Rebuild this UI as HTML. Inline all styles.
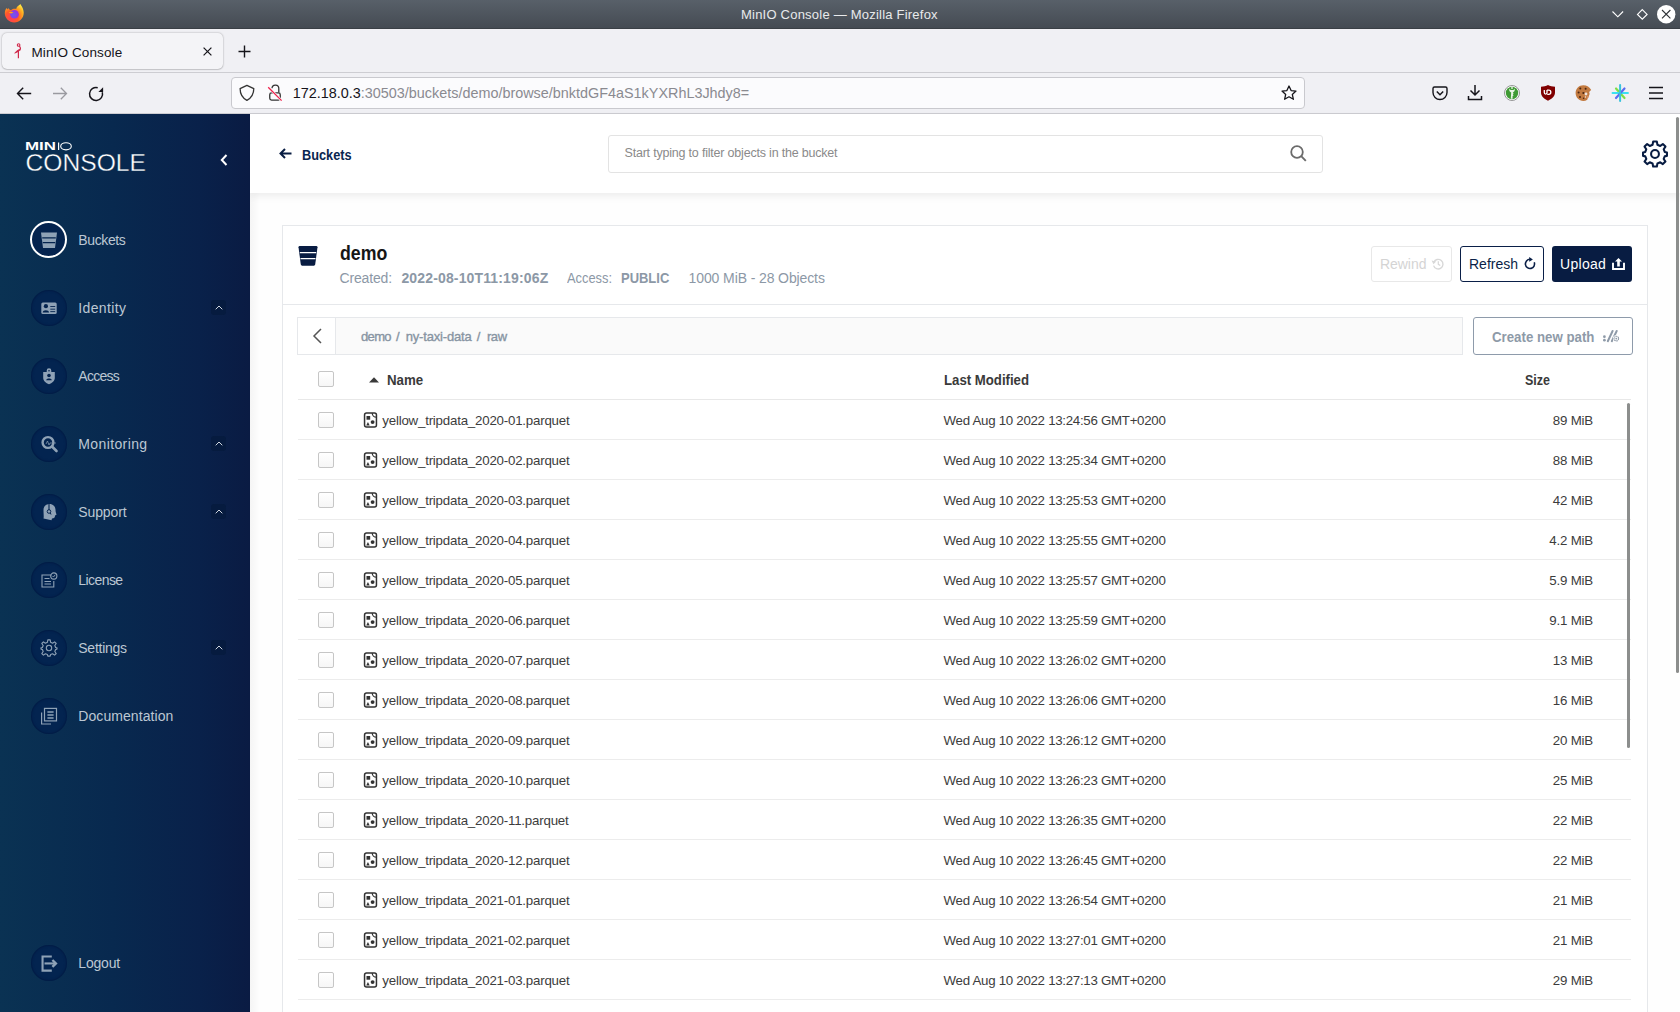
<!DOCTYPE html>
<html><head><meta charset="utf-8"><title>MinIO Console</title><style>
*{box-sizing:border-box;margin:0;padding:0}
html,body{width:1680px;height:1012px;overflow:hidden;background:#fff;font-family:"Liberation Sans",sans-serif}
.t{position:absolute;line-height:1;white-space:nowrap}
.a{position:absolute}
svg{position:absolute;overflow:visible}
</style></head><body>
<div class="a" style="left:0;top:0;width:1680px;height:29px;background:linear-gradient(#586069,#454b53);border-bottom:1px solid #3a3f45"></div>
<div class="t" style="left:741px;top:8.25px;font-size:13px;color:#e8eaec;font-weight:400;letter-spacing:0.22px;">MinIO Console — Mozilla Firefox</div>
<svg style="left:4px;top:3px" width="21" height="21" viewBox="0 0 21 21">
<defs><radialGradient id="ffg" cx="0.35" cy="0.75" r="0.8"><stop offset="0" stop-color="#ff3c5a"/><stop offset="0.45" stop-color="#ff5a2a"/><stop offset="0.8" stop-color="#ffb020"/><stop offset="1" stop-color="#ffe040"/></radialGradient>
<radialGradient id="ffp" cx="0.4" cy="0.6" r="0.6"><stop offset="0" stop-color="#6a5cf0"/><stop offset="1" stop-color="#9a30e0"/></radialGradient></defs>
<path d="M16.5 1 C17.5 3.5 19.5 5 19.7 9.5 C19.9 15 15.5 19.5 10.2 19.5 C5 19.5 0.8 15.3 0.8 10.3 C0.8 8 1.6 6.2 2.6 5 L3.4 6.6 L4.2 5 C5.2 6.4 6 7 7 7.2 C8.5 6 10.5 5.6 12.2 6 C12.4 4 14.5 2.5 16.5 1 Z" fill="url(#ffg)"/>
<circle cx="10.5" cy="11.2" r="4.3" fill="url(#ffp)"/>
<path d="M4.5 9.5 C6 8.3 8 8.6 9.5 9.6 L7.2 10.6 Z" fill="#ffa515"/>
</svg>
<svg style="left:1612px;top:11px" width="12" height="7" viewBox="0 0 12 7"><path d="M0.5 0.5 L5.8 5.8 L11.1 0.5" fill="none" stroke="#fff" stroke-width="1.15"/></svg>
<svg style="left:1636.5px;top:8.5px" width="11" height="11" viewBox="0 0 11 11"><path d="M5.3 0.6 L10.1 5.4 L5.3 10.2 L0.5 5.4 Z" fill="none" stroke="#fff" stroke-width="1.15"/></svg>
<svg style="left:1656.8px;top:4.7px" width="19" height="19" viewBox="0 0 19 19"><circle cx="9.2" cy="9.2" r="9.2" fill="#fff"/><path d="M5 5 L13.4 13.4 M13.4 5 L5 13.4" stroke="#2e3236" stroke-width="1.1"/></svg>
<div class="a" style="left:0;top:29px;width:1680px;height:44px;background:#f0f0f4;border-bottom:1px solid #cdcdd2"></div>
<div class="a" style="left:2px;top:33px;width:221px;height:36px;background:#f4f4f7;border-radius:5px;box-shadow:0 0 2px rgba(0,0,0,.35),0 1px 1px rgba(0,0,0,.1)"></div>
<svg style="left:10px;top:38px" width="20" height="24" viewBox="0 0 20 24"><circle cx="8.6" cy="7" r="1.3" fill="none" stroke="#d02a4c" stroke-width="1.1"/><path d="M9.4 8.2 C10.6 9.5 10.8 11 9.8 12.3" fill="none" stroke="#d02a4c" stroke-width="1.1"/><path d="M10.2 10.8 C8.5 11.2 6 13 4 15.6 C6 15.4 8.5 14 10 12.5 Z" fill="#d02a4c"/><path d="M8.4 12.5 V20.2" stroke="#d02a4c" stroke-width="1.2"/></svg>
<div class="t" style="left:31.5px;top:45.57px;font-size:13.5px;color:#15141a;font-weight:400;letter-spacing:0.12px;">MinIO Console</div>
<svg style="left:203px;top:47px" width="9" height="9" viewBox="0 0 9 9"><path d="M0.6 0.6 L8.4 8.4 M8.4 0.6 L0.6 8.4" stroke="#15141a" stroke-width="1.2"/></svg>
<svg style="left:238px;top:45px" width="13" height="13" viewBox="0 0 13 13"><path d="M6.5 0.5 V12.5 M0.5 6.5 H12.5" stroke="#15141a" stroke-width="1.4"/></svg>
<div class="a" style="left:0;top:73px;width:1680px;height:41px;background:#f0f0f4;border-bottom:1px solid #cdcdd2"></div>
<svg style="left:16px;top:86px" width="16" height="15" viewBox="0 0 16 15"><path d="M15.2 7.5 H2 M7.2 1.8 L1.5 7.5 L7.2 13.2" fill="none" stroke="#15141a" stroke-width="1.4"/></svg>
<svg style="left:52px;top:86px" width="16" height="15" viewBox="0 0 16 15"><path d="M1 7.5 H14.2 M8.8 1.8 L14.5 7.5 L8.8 13.2" fill="none" stroke="#9a9aa0" stroke-width="1.3"/></svg>
<svg style="left:88px;top:86px" width="16" height="16" viewBox="0 0 16 16"><path d="M9.7 1.7 A6.5 6.5 0 1 0 14.3 6.2" fill="none" stroke="#15141a" stroke-width="1.5"/><path d="M10.4 6.1 L15.1 6.1 L15.1 1.2 Z" fill="#15141a"/></svg>
<div class="a" style="left:231px;top:77px;width:1074px;height:32px;background:#fbfbfd;border:1px solid #c9c9ce;border-radius:4px"></div>
<svg style="left:239px;top:84px" width="16" height="17" viewBox="0 0 16 17"><path d="M7.9 1.3 L14.8 4.6 C14.8 10 12.5 14 7.9 16.4 C3.3 14 1.1 10 1.1 4.6 Z" fill="none" stroke="#333" stroke-width="1.3" stroke-linejoin="round"/></svg>
<svg style="left:267px;top:84px" width="16" height="17" viewBox="0 0 16 17"><rect x="2.75" y="8.85" width="10.5" height="7.3" rx="1.8" fill="none" stroke="#333" stroke-width="1.3"/><path d="M5 4.3 A3.4 3.4 0 0 1 11.8 4.6 V8.6" fill="none" stroke="#333" stroke-width="1.3"/><path d="M1.2 3.2 L14.6 16.6" stroke="#fafafa" stroke-width="2.6"/><path d="M1.2 3.2 L14.6 16.6" stroke="#f0204c" stroke-width="1.3"/></svg>
<div class="t" style="left:292.8px;top:86.11px;font-size:14.4px;color:#15141a;font-weight:400;letter-spacing:0px;"><span style="color:#15141a">172.18.0.3</span><span style="color:#8a8a90">:30503/buckets/demo/browse/bnktdGF4aS1kYXRhL3Jhdy8=</span></div>
<svg style="left:1281px;top:85px" width="16" height="16" viewBox="0 0 16 16"><path d="M8 1 L10.1 5.6 L15 6.1 L11.3 9.4 L12.4 14.3 L8 11.8 L3.6 14.3 L4.7 9.4 L1 6.1 L5.9 5.6 Z" fill="none" stroke="#15141a" stroke-width="1.3" stroke-linejoin="round"/></svg>
<svg style="left:1432px;top:86px" width="16" height="15" viewBox="0 0 16 15"><path d="M2.5 1 H13.5 A1.5 1.5 0 0 1 15 2.5 V6.5 A7 7 0 0 1 1 6.5 V2.5 A1.5 1.5 0 0 1 2.5 1 Z" fill="none" stroke="#15141a" stroke-width="1.4"/><path d="M4.8 5.5 L8 8.7 L11.2 5.5" fill="none" stroke="#15141a" stroke-width="1.5"/></svg>
<svg style="left:1467px;top:84px" width="16" height="17" viewBox="0 0 16 17"><path d="M8 1 V11 M3.5 6.5 L8 11 L12.5 6.5 M1.5 12 V15.5 H14.5 V12" fill="none" stroke="#15141a" stroke-width="1.5"/></svg>
<svg style="left:1504px;top:85px" width="16" height="16" viewBox="0 0 16 16"><circle cx="8" cy="8" r="7.5" fill="#fff" stroke="#8a8a8a" stroke-width="0.9"/><circle cx="8" cy="8" r="6.2" fill="#3f9a34"/><path d="M5 3.5 C5 6.5 6.5 7 7.2 7.6 L6.8 13.8 H8.6 L8.6 11 L9.6 10.5 L8.8 9.5 L9.6 8.8 L8.8 7.6 C9.5 7 11 6.5 11 3.5 C10 5.5 6 5.5 5 3.5 Z" fill="#e8f4e4"/><circle cx="8" cy="3" r="0.9" fill="#e8f4e4"/></svg>
<svg style="left:1540px;top:84px" width="16" height="17" viewBox="0 0 16 17"><path d="M8 1 C10 2.2 12.5 2.7 15 2.7 V8.5 C15 12.5 11.5 15 8 16.7 C4.5 15 1 12.5 1 8.5 V2.7 C3.5 2.7 6 2.2 8 1 Z" fill="#800000"/><path d="M4.3 6 V8.6 C4.3 10.6 7 10.6 7 8.6 V6 M7 6.2 H8.8 C11.5 6.2 11.5 10.4 8.8 10.4 H7.2" fill="none" stroke="#fff" stroke-width="1.3"/></svg>
<svg style="left:1575px;top:85px" width="17" height="16" viewBox="0 0 17 16"><path d="M8.3 0.2 C12 0.2 14.6 2 16.2 5 C15.5 6 14.5 6 14.2 7.5 C15.2 9 14 10.5 13.5 11.5 C13 12.5 12.5 14 12.3 14.8 C11 15.6 9.8 16 8.3 16 C3.9 16 0.6 12.5 0.6 8.1 C0.6 3.7 3.9 0.2 8.3 0.2 Z" fill="#c27a40"/><circle cx="5.3" cy="3.4" r="1" fill="#4a2410"/><circle cx="10.6" cy="3.8" r="1" fill="#4a2410"/><circle cx="3.6" cy="7.6" r="1" fill="#4a2410"/><circle cx="8.4" cy="8" r="1.1" fill="#4a2410"/><circle cx="5" cy="12" r="1" fill="#4a2410"/><circle cx="8.6" cy="13.2" r="0.8" fill="#4a2410"/><circle cx="11" cy="9" r="1.4" fill="#f0e4dc"/><circle cx="12.8" cy="11.8" r="1.1" fill="#d89060"/><circle cx="10.5" cy="12" r="0.7" fill="#f4ece4"/></svg>
<svg style="left:1611px;top:84px" width="18" height="18" viewBox="0 0 18 18"><path d="M5 4.5 L13.5 14" stroke="#7ede48" stroke-width="2.2" stroke-linecap="round"/><path d="M1.5 9 H17" stroke="#3ae0f0" stroke-width="1.9" stroke-linecap="round"/><path d="M13.5 4.5 L5 14" stroke="#5a6cf0" stroke-width="2.2" stroke-linecap="round"/><path d="M9.1 1 V17" stroke="#38c4dc" stroke-width="2" stroke-linecap="round"/></svg>
<svg style="left:1648px;top:86px" width="16" height="14" viewBox="0 0 16 14"><path d="M1 1.5 H15 M1 7 H15 M1 12.5 H15" stroke="#15141a" stroke-width="1.5"/></svg>
<div class="a" style="left:250px;top:114px;width:1430px;height:898px;background:#fefefe"></div>
<div class="a" style="left:250px;top:193px;width:10px;height:819px;background:linear-gradient(90deg,rgba(0,0,0,.035),rgba(0,0,0,0))"></div>
<div class="a" style="left:250px;top:114px;width:1430px;height:79px;background:#fff;box-shadow:0 3px 8px rgba(0,0,0,.075)"></div>
<svg style="left:279px;top:148px" width="13" height="11" viewBox="0 0 13 11"><path d="M12.5 5.5 H2 M6 1 L1.5 5.5 L6 10" fill="none" stroke="#081c42" stroke-width="2"/></svg>
<div class="t" style="left:302.2px;top:148.25px;font-size:14px;color:#0a2650;font-weight:700;letter-spacing:0px;transform:scaleX(0.91);transform-origin:0 0;">Buckets</div>
<div class="a" style="left:608px;top:135px;width:715px;height:38px;background:#fff;border:1px solid #e3e3e3;border-radius:3px"></div>
<div class="t" style="left:624.5px;top:147.02px;font-size:12.5px;color:#8a8a8a;font-weight:400;letter-spacing:-0.2px;">Start typing to filter objects in the bucket</div>
<svg style="left:1290px;top:145px" width="17" height="17" viewBox="0 0 17 17"><circle cx="7" cy="7" r="5.8" fill="none" stroke="#6b6b6b" stroke-width="1.8"/><path d="M11.2 11.2 L15.8 15.8" stroke="#6b6b6b" stroke-width="1.9"/></svg>
<svg style="left:1655px;top:154px" width="1" height="1" viewBox="0 0 1 1"><g fill="none" stroke="#081c42" stroke-width="2.2" stroke-linejoin="round" transform="scale(0.935)">
<path d="M-2 -12.2 H2 L2.6 -8.8 L5.6 -7.5 L8.4 -9.5 L11.2 -6.8 L9.3 -4 L10.4 -1.1 L12.8 -0.6 V3.1 L10.4 3.6 L9.3 6.4 L11.2 9.2 L8.4 11.9 L5.6 10 L2.6 11.2 L2 14.4 H-2 L-2.6 11.2 L-5.6 10 L-8.4 11.9 L-11.2 9.2 L-9.3 6.4 L-10.4 3.6 L-12.8 3.1 V-0.6 L-10.4 -1.1 L-9.3 -4 L-11.2 -6.8 L-8.4 -9.5 L-5.6 -7.5 L-2.6 -8.8 Z" transform="translate(0,-1.1)"/>
<circle cx="0" cy="0" r="4.2"/></g></svg>
<div class="a" style="left:1676px;top:116.5px;width:3px;height:556px;border-radius:2px;background:#8c8e8d"></div>
<div class="a" style="left:282px;top:225px;width:1366px;height:800px;background:#fff;border:1px solid #e6e8eb"></div>
<div class="a" style="left:283px;top:304px;width:1364px;height:1px;background:#e6e8eb"></div>
<svg style="left:298px;top:246px" width="20" height="20" viewBox="0 0 20 20"><path d="M0.5 1.2 Q0.5 0 1.7 0 H18.3 Q19.5 0 19.5 1.2 L17.2 18.6 Q17 19.7 15.9 19.7 H4.1 Q3 19.7 2.8 18.6 Z" fill="#081c42"/><path d="M1.8 6.6 H18.2 M2.5 12.7 H17.5" stroke="#fff" stroke-width="1.3"/></svg>
<div class="t" style="left:339.5px;top:242.67px;font-size:20px;color:#161616;font-weight:700;letter-spacing:0px;transform:scaleX(0.887);transform-origin:0 0;">demo</div>
<div class="t" style="left:339.5px;top:271.05px;font-size:14px;color:#8c98a6;font-weight:400;letter-spacing:-0.15px;">Created:</div>
<div class="t" style="left:401.4px;top:271.05px;font-size:14px;color:#8c98a6;font-weight:700;letter-spacing:0.15px;">2022-08-10T11:19:06Z</div>
<div class="t" style="left:567.1px;top:271.05px;font-size:14px;color:#8c98a6;font-weight:400;letter-spacing:0px;transform:scaleX(0.918);transform-origin:0 0;">Access:</div>
<div class="t" style="left:621.3px;top:271.05px;font-size:14px;color:#8c98a6;font-weight:700;letter-spacing:0px;transform:scaleX(0.926);transform-origin:0 0;">PUBLIC</div>
<div class="t" style="left:688.6px;top:271.05px;font-size:14px;color:#8c98a6;font-weight:400;letter-spacing:-0.11px;">1000 MiB - 28 Objects</div>
<div class="a" style="left:1371px;top:246px;width:81px;height:36px;border:1px solid #e8e8e8;border-radius:3px"></div>
<div class="t" style="left:1380px;top:256.95px;font-size:14px;color:#d4d4d4;font-weight:400;letter-spacing:-0.05px;">Rewind</div>
<svg style="left:1432px;top:258px" width="12" height="12" viewBox="0 0 12 12"><path d="M1.8 4.2 A4.8 4.8 0 1 1 1.6 7.6" fill="none" stroke="#d8d8d8" stroke-width="1.4"/><path d="M-0.4 2.6 L1.4 6.2 L4.2 3.4 Z" fill="#d8d8d8"/><path d="M6.3 3.3 V6.3 L8.3 7.6" fill="none" stroke="#d8d8d8" stroke-width="1.2"/></svg>
<div class="a" style="left:1460px;top:246px;width:84px;height:36px;border:1.5px solid #0a1f47;border-radius:3px;background:#fff"></div>
<div class="t" style="left:1469px;top:256.95px;font-size:14px;color:#0a1f47;font-weight:400;letter-spacing:0px;">Refresh</div>
<svg style="left:1524px;top:258px" width="12" height="12" viewBox="0 0 12 12"><path d="M5.9 1.3 A4.6 4.6 0 1 0 10.3 4.3" fill="none" stroke="#0a1f47" stroke-width="1.6"/><path d="M5.2 -1 L8.9 1.4 L5.2 3.8 Z" fill="#0a1f47"/></svg>
<div class="a" style="left:1552px;top:246px;width:80px;height:36px;border-radius:3px;background:#081c42"></div>
<div class="t" style="left:1560px;top:256.95px;font-size:14px;color:#fff;font-weight:400;letter-spacing:0.3px;">Upload</div>
<svg style="left:1611.5px;top:258px" width="13" height="12" viewBox="0 0 13 12"><path d="M6.5 0 L10 3.6 H7.8 V8.5 H5.2 V3.6 H3 Z" fill="#fff"/><path d="M1 4.8 V11 H12 V4.8" fill="none" stroke="#fff" stroke-width="1.9"/></svg>
<div class="a" style="left:297px;top:317px;width:1166px;height:38px;border:1px solid #e6e8eb;background:#fafafa"></div>
<div class="a" style="left:298px;top:318px;width:37.5px;height:36px;background:#fff;border-right:1px solid #e6e8eb"></div>
<svg style="left:312px;top:328px" width="10" height="16" viewBox="0 0 10 16"><path d="M9 1 L2 8 L9 15" fill="none" stroke="#555" stroke-width="1.5"/></svg>
<div class="t" style="left:361.1px;top:329.70px;font-size:13px;color:#8794a2;font-weight:400;letter-spacing:-0.7px;-webkit-text-stroke:0.35px #8794a2;">demo</div>
<div class="t" style="left:396.0px;top:329.70px;font-size:13px;color:#8794a2;font-weight:400;letter-spacing:0px;-webkit-text-stroke:0.35px #8794a2;">/</div>
<div class="t" style="left:405.7px;top:329.70px;font-size:13px;color:#8794a2;font-weight:400;letter-spacing:-0.17px;-webkit-text-stroke:0.35px #8794a2;">ny-taxi-data</div>
<div class="t" style="left:476.8px;top:329.70px;font-size:13px;color:#8794a2;font-weight:400;letter-spacing:0px;-webkit-text-stroke:0.35px #8794a2;">/</div>
<div class="t" style="left:486.9px;top:329.70px;font-size:13px;color:#8794a2;font-weight:400;letter-spacing:-0.4px;-webkit-text-stroke:0.35px #8794a2;">raw</div>
<div class="a" style="left:1473px;top:317px;width:160px;height:38px;border:1px solid #8e9bab;border-radius:3px;background:#fff"></div>
<div class="t" style="left:1491.8px;top:330.05px;font-size:14px;color:#8e9aa8;font-weight:700;letter-spacing:0px;transform:scaleX(0.947);transform-origin:0 0;">Create new path</div>
<svg style="left:1603px;top:330px" width="17" height="13" viewBox="0 0 17 13"><circle cx="1.4" cy="6.7" r="1.35" fill="#8e9aa8"/><circle cx="1.4" cy="10.2" r="1.35" fill="#8e9aa8"/><path d="M9.6 1 L4.8 11.2 M13.7 1 L8.8 11.2" stroke="#8e9aa8" stroke-width="2" stroke-linecap="round"/><circle cx="13.3" cy="8.6" r="2.6" fill="#fff" stroke="#fff" stroke-width="1.6"/><circle cx="13.3" cy="8.6" r="2.3" fill="none" stroke="#8e9aa8" stroke-width="1.1" stroke-dasharray="1.4 0.5"/><circle cx="13.3" cy="8.6" r="0.9" fill="#8e9aa8"/></svg>
<div class="a" style="left:318px;top:371px;width:16px;height:16px;border:1px solid #c6c6c6;border-radius:2px;background:linear-gradient(#fff,#f6f6f6)"></div>
<svg style="left:369px;top:377px" width="10" height="6" viewBox="0 0 10 6"><path d="M0 5.5 L5 0.3 L10 5.5 Z" fill="#3a3a3a"/></svg>
<div class="t" style="left:386.9px;top:373.15px;font-size:14px;color:#3a3a3a;font-weight:700;letter-spacing:0px;transform:scaleX(0.95);transform-origin:0 0;">Name</div>
<div class="t" style="left:943.6px;top:373.15px;font-size:14px;color:#3a3a3a;font-weight:700;letter-spacing:0px;transform:scaleX(0.942);transform-origin:0 0;">Last Modified</div>
<div class="t" style="left:1525px;top:373.15px;font-size:14px;color:#3a3a3a;font-weight:700;letter-spacing:0px;transform:scaleX(0.893);transform-origin:0 0;">Size</div>
<div class="a" style="left:298px;top:399px;width:1333px;height:1px;background:#e8e8e8"></div>
<div class="a" style="left:318px;top:412px;width:16px;height:16px;border:1px solid #c6c6c6;border-radius:2px;background:linear-gradient(#fff,#f6f6f6)"></div>
<svg style="left:362.5px;top:412px" width="14" height="16" viewBox="0 0 14 16"><rect x="1.55" y="0.95" width="11.9" height="14.1" rx="2" fill="none" stroke="#333" stroke-width="1.5"/><path d="M9.2 0.95 A4.25 4.25 0 0 0 13.45 5.2" fill="none" stroke="#333" stroke-width="1.2"/><rect x="3.5" y="4" width="3.7" height="3.7" fill="#333"/><circle cx="9.6" cy="10.1" r="1.95" fill="#333"/><path d="M3.2 13.6 L6.7 13.6 L4.95 9.9 Z" fill="#333"/></svg>
<div class="t" style="left:382.3px;top:413.54px;font-size:13.3px;color:#3c3c3c;font-weight:400;letter-spacing:-0.21px;">yellow_tripdata_2020-01.parquet</div>
<div class="t" style="left:943.6px;top:413.54px;font-size:13.3px;color:#3c3c3c;font-weight:400;letter-spacing:-0.29px;">Wed Aug 10 2022 13:24:56 GMT+0200</div>
<div class="t" style="right:87px;top:413.54px;font-size:13.3px;color:#3c3c3c;letter-spacing:-0.18px">89 MiB</div>
<div class="a" style="left:298px;top:439px;width:1333px;height:1px;background:#ececec"></div>
<div class="a" style="left:318px;top:452px;width:16px;height:16px;border:1px solid #c6c6c6;border-radius:2px;background:linear-gradient(#fff,#f6f6f6)"></div>
<svg style="left:362.5px;top:452px" width="14" height="16" viewBox="0 0 14 16"><rect x="1.55" y="0.95" width="11.9" height="14.1" rx="2" fill="none" stroke="#333" stroke-width="1.5"/><path d="M9.2 0.95 A4.25 4.25 0 0 0 13.45 5.2" fill="none" stroke="#333" stroke-width="1.2"/><rect x="3.5" y="4" width="3.7" height="3.7" fill="#333"/><circle cx="9.6" cy="10.1" r="1.95" fill="#333"/><path d="M3.2 13.6 L6.7 13.6 L4.95 9.9 Z" fill="#333"/></svg>
<div class="t" style="left:382.3px;top:453.54px;font-size:13.3px;color:#3c3c3c;font-weight:400;letter-spacing:-0.21px;">yellow_tripdata_2020-02.parquet</div>
<div class="t" style="left:943.6px;top:453.54px;font-size:13.3px;color:#3c3c3c;font-weight:400;letter-spacing:-0.29px;">Wed Aug 10 2022 13:25:34 GMT+0200</div>
<div class="t" style="right:87px;top:453.54px;font-size:13.3px;color:#3c3c3c;letter-spacing:-0.18px">88 MiB</div>
<div class="a" style="left:298px;top:479px;width:1333px;height:1px;background:#ececec"></div>
<div class="a" style="left:318px;top:492px;width:16px;height:16px;border:1px solid #c6c6c6;border-radius:2px;background:linear-gradient(#fff,#f6f6f6)"></div>
<svg style="left:362.5px;top:492px" width="14" height="16" viewBox="0 0 14 16"><rect x="1.55" y="0.95" width="11.9" height="14.1" rx="2" fill="none" stroke="#333" stroke-width="1.5"/><path d="M9.2 0.95 A4.25 4.25 0 0 0 13.45 5.2" fill="none" stroke="#333" stroke-width="1.2"/><rect x="3.5" y="4" width="3.7" height="3.7" fill="#333"/><circle cx="9.6" cy="10.1" r="1.95" fill="#333"/><path d="M3.2 13.6 L6.7 13.6 L4.95 9.9 Z" fill="#333"/></svg>
<div class="t" style="left:382.3px;top:493.54px;font-size:13.3px;color:#3c3c3c;font-weight:400;letter-spacing:-0.21px;">yellow_tripdata_2020-03.parquet</div>
<div class="t" style="left:943.6px;top:493.54px;font-size:13.3px;color:#3c3c3c;font-weight:400;letter-spacing:-0.29px;">Wed Aug 10 2022 13:25:53 GMT+0200</div>
<div class="t" style="right:87px;top:493.54px;font-size:13.3px;color:#3c3c3c;letter-spacing:-0.18px">42 MiB</div>
<div class="a" style="left:298px;top:519px;width:1333px;height:1px;background:#ececec"></div>
<div class="a" style="left:318px;top:532px;width:16px;height:16px;border:1px solid #c6c6c6;border-radius:2px;background:linear-gradient(#fff,#f6f6f6)"></div>
<svg style="left:362.5px;top:532px" width="14" height="16" viewBox="0 0 14 16"><rect x="1.55" y="0.95" width="11.9" height="14.1" rx="2" fill="none" stroke="#333" stroke-width="1.5"/><path d="M9.2 0.95 A4.25 4.25 0 0 0 13.45 5.2" fill="none" stroke="#333" stroke-width="1.2"/><rect x="3.5" y="4" width="3.7" height="3.7" fill="#333"/><circle cx="9.6" cy="10.1" r="1.95" fill="#333"/><path d="M3.2 13.6 L6.7 13.6 L4.95 9.9 Z" fill="#333"/></svg>
<div class="t" style="left:382.3px;top:533.54px;font-size:13.3px;color:#3c3c3c;font-weight:400;letter-spacing:-0.21px;">yellow_tripdata_2020-04.parquet</div>
<div class="t" style="left:943.6px;top:533.54px;font-size:13.3px;color:#3c3c3c;font-weight:400;letter-spacing:-0.29px;">Wed Aug 10 2022 13:25:55 GMT+0200</div>
<div class="t" style="right:87px;top:533.54px;font-size:13.3px;color:#3c3c3c;letter-spacing:-0.18px">4.2 MiB</div>
<div class="a" style="left:298px;top:559px;width:1333px;height:1px;background:#ececec"></div>
<div class="a" style="left:318px;top:572px;width:16px;height:16px;border:1px solid #c6c6c6;border-radius:2px;background:linear-gradient(#fff,#f6f6f6)"></div>
<svg style="left:362.5px;top:572px" width="14" height="16" viewBox="0 0 14 16"><rect x="1.55" y="0.95" width="11.9" height="14.1" rx="2" fill="none" stroke="#333" stroke-width="1.5"/><path d="M9.2 0.95 A4.25 4.25 0 0 0 13.45 5.2" fill="none" stroke="#333" stroke-width="1.2"/><rect x="3.5" y="4" width="3.7" height="3.7" fill="#333"/><circle cx="9.6" cy="10.1" r="1.95" fill="#333"/><path d="M3.2 13.6 L6.7 13.6 L4.95 9.9 Z" fill="#333"/></svg>
<div class="t" style="left:382.3px;top:573.54px;font-size:13.3px;color:#3c3c3c;font-weight:400;letter-spacing:-0.21px;">yellow_tripdata_2020-05.parquet</div>
<div class="t" style="left:943.6px;top:573.54px;font-size:13.3px;color:#3c3c3c;font-weight:400;letter-spacing:-0.29px;">Wed Aug 10 2022 13:25:57 GMT+0200</div>
<div class="t" style="right:87px;top:573.54px;font-size:13.3px;color:#3c3c3c;letter-spacing:-0.18px">5.9 MiB</div>
<div class="a" style="left:298px;top:599px;width:1333px;height:1px;background:#ececec"></div>
<div class="a" style="left:318px;top:612px;width:16px;height:16px;border:1px solid #c6c6c6;border-radius:2px;background:linear-gradient(#fff,#f6f6f6)"></div>
<svg style="left:362.5px;top:612px" width="14" height="16" viewBox="0 0 14 16"><rect x="1.55" y="0.95" width="11.9" height="14.1" rx="2" fill="none" stroke="#333" stroke-width="1.5"/><path d="M9.2 0.95 A4.25 4.25 0 0 0 13.45 5.2" fill="none" stroke="#333" stroke-width="1.2"/><rect x="3.5" y="4" width="3.7" height="3.7" fill="#333"/><circle cx="9.6" cy="10.1" r="1.95" fill="#333"/><path d="M3.2 13.6 L6.7 13.6 L4.95 9.9 Z" fill="#333"/></svg>
<div class="t" style="left:382.3px;top:613.54px;font-size:13.3px;color:#3c3c3c;font-weight:400;letter-spacing:-0.21px;">yellow_tripdata_2020-06.parquet</div>
<div class="t" style="left:943.6px;top:613.54px;font-size:13.3px;color:#3c3c3c;font-weight:400;letter-spacing:-0.29px;">Wed Aug 10 2022 13:25:59 GMT+0200</div>
<div class="t" style="right:87px;top:613.54px;font-size:13.3px;color:#3c3c3c;letter-spacing:-0.18px">9.1 MiB</div>
<div class="a" style="left:298px;top:639px;width:1333px;height:1px;background:#ececec"></div>
<div class="a" style="left:318px;top:652px;width:16px;height:16px;border:1px solid #c6c6c6;border-radius:2px;background:linear-gradient(#fff,#f6f6f6)"></div>
<svg style="left:362.5px;top:652px" width="14" height="16" viewBox="0 0 14 16"><rect x="1.55" y="0.95" width="11.9" height="14.1" rx="2" fill="none" stroke="#333" stroke-width="1.5"/><path d="M9.2 0.95 A4.25 4.25 0 0 0 13.45 5.2" fill="none" stroke="#333" stroke-width="1.2"/><rect x="3.5" y="4" width="3.7" height="3.7" fill="#333"/><circle cx="9.6" cy="10.1" r="1.95" fill="#333"/><path d="M3.2 13.6 L6.7 13.6 L4.95 9.9 Z" fill="#333"/></svg>
<div class="t" style="left:382.3px;top:653.54px;font-size:13.3px;color:#3c3c3c;font-weight:400;letter-spacing:-0.21px;">yellow_tripdata_2020-07.parquet</div>
<div class="t" style="left:943.6px;top:653.54px;font-size:13.3px;color:#3c3c3c;font-weight:400;letter-spacing:-0.29px;">Wed Aug 10 2022 13:26:02 GMT+0200</div>
<div class="t" style="right:87px;top:653.54px;font-size:13.3px;color:#3c3c3c;letter-spacing:-0.18px">13 MiB</div>
<div class="a" style="left:298px;top:679px;width:1333px;height:1px;background:#ececec"></div>
<div class="a" style="left:318px;top:692px;width:16px;height:16px;border:1px solid #c6c6c6;border-radius:2px;background:linear-gradient(#fff,#f6f6f6)"></div>
<svg style="left:362.5px;top:692px" width="14" height="16" viewBox="0 0 14 16"><rect x="1.55" y="0.95" width="11.9" height="14.1" rx="2" fill="none" stroke="#333" stroke-width="1.5"/><path d="M9.2 0.95 A4.25 4.25 0 0 0 13.45 5.2" fill="none" stroke="#333" stroke-width="1.2"/><rect x="3.5" y="4" width="3.7" height="3.7" fill="#333"/><circle cx="9.6" cy="10.1" r="1.95" fill="#333"/><path d="M3.2 13.6 L6.7 13.6 L4.95 9.9 Z" fill="#333"/></svg>
<div class="t" style="left:382.3px;top:693.54px;font-size:13.3px;color:#3c3c3c;font-weight:400;letter-spacing:-0.21px;">yellow_tripdata_2020-08.parquet</div>
<div class="t" style="left:943.6px;top:693.54px;font-size:13.3px;color:#3c3c3c;font-weight:400;letter-spacing:-0.29px;">Wed Aug 10 2022 13:26:06 GMT+0200</div>
<div class="t" style="right:87px;top:693.54px;font-size:13.3px;color:#3c3c3c;letter-spacing:-0.18px">16 MiB</div>
<div class="a" style="left:298px;top:719px;width:1333px;height:1px;background:#ececec"></div>
<div class="a" style="left:318px;top:732px;width:16px;height:16px;border:1px solid #c6c6c6;border-radius:2px;background:linear-gradient(#fff,#f6f6f6)"></div>
<svg style="left:362.5px;top:732px" width="14" height="16" viewBox="0 0 14 16"><rect x="1.55" y="0.95" width="11.9" height="14.1" rx="2" fill="none" stroke="#333" stroke-width="1.5"/><path d="M9.2 0.95 A4.25 4.25 0 0 0 13.45 5.2" fill="none" stroke="#333" stroke-width="1.2"/><rect x="3.5" y="4" width="3.7" height="3.7" fill="#333"/><circle cx="9.6" cy="10.1" r="1.95" fill="#333"/><path d="M3.2 13.6 L6.7 13.6 L4.95 9.9 Z" fill="#333"/></svg>
<div class="t" style="left:382.3px;top:733.54px;font-size:13.3px;color:#3c3c3c;font-weight:400;letter-spacing:-0.21px;">yellow_tripdata_2020-09.parquet</div>
<div class="t" style="left:943.6px;top:733.54px;font-size:13.3px;color:#3c3c3c;font-weight:400;letter-spacing:-0.29px;">Wed Aug 10 2022 13:26:12 GMT+0200</div>
<div class="t" style="right:87px;top:733.54px;font-size:13.3px;color:#3c3c3c;letter-spacing:-0.18px">20 MiB</div>
<div class="a" style="left:298px;top:759px;width:1333px;height:1px;background:#ececec"></div>
<div class="a" style="left:318px;top:772px;width:16px;height:16px;border:1px solid #c6c6c6;border-radius:2px;background:linear-gradient(#fff,#f6f6f6)"></div>
<svg style="left:362.5px;top:772px" width="14" height="16" viewBox="0 0 14 16"><rect x="1.55" y="0.95" width="11.9" height="14.1" rx="2" fill="none" stroke="#333" stroke-width="1.5"/><path d="M9.2 0.95 A4.25 4.25 0 0 0 13.45 5.2" fill="none" stroke="#333" stroke-width="1.2"/><rect x="3.5" y="4" width="3.7" height="3.7" fill="#333"/><circle cx="9.6" cy="10.1" r="1.95" fill="#333"/><path d="M3.2 13.6 L6.7 13.6 L4.95 9.9 Z" fill="#333"/></svg>
<div class="t" style="left:382.3px;top:773.54px;font-size:13.3px;color:#3c3c3c;font-weight:400;letter-spacing:-0.21px;">yellow_tripdata_2020-10.parquet</div>
<div class="t" style="left:943.6px;top:773.54px;font-size:13.3px;color:#3c3c3c;font-weight:400;letter-spacing:-0.29px;">Wed Aug 10 2022 13:26:23 GMT+0200</div>
<div class="t" style="right:87px;top:773.54px;font-size:13.3px;color:#3c3c3c;letter-spacing:-0.18px">25 MiB</div>
<div class="a" style="left:298px;top:799px;width:1333px;height:1px;background:#ececec"></div>
<div class="a" style="left:318px;top:812px;width:16px;height:16px;border:1px solid #c6c6c6;border-radius:2px;background:linear-gradient(#fff,#f6f6f6)"></div>
<svg style="left:362.5px;top:812px" width="14" height="16" viewBox="0 0 14 16"><rect x="1.55" y="0.95" width="11.9" height="14.1" rx="2" fill="none" stroke="#333" stroke-width="1.5"/><path d="M9.2 0.95 A4.25 4.25 0 0 0 13.45 5.2" fill="none" stroke="#333" stroke-width="1.2"/><rect x="3.5" y="4" width="3.7" height="3.7" fill="#333"/><circle cx="9.6" cy="10.1" r="1.95" fill="#333"/><path d="M3.2 13.6 L6.7 13.6 L4.95 9.9 Z" fill="#333"/></svg>
<div class="t" style="left:382.3px;top:813.54px;font-size:13.3px;color:#3c3c3c;font-weight:400;letter-spacing:-0.21px;">yellow_tripdata_2020-11.parquet</div>
<div class="t" style="left:943.6px;top:813.54px;font-size:13.3px;color:#3c3c3c;font-weight:400;letter-spacing:-0.29px;">Wed Aug 10 2022 13:26:35 GMT+0200</div>
<div class="t" style="right:87px;top:813.54px;font-size:13.3px;color:#3c3c3c;letter-spacing:-0.18px">22 MiB</div>
<div class="a" style="left:298px;top:839px;width:1333px;height:1px;background:#ececec"></div>
<div class="a" style="left:318px;top:852px;width:16px;height:16px;border:1px solid #c6c6c6;border-radius:2px;background:linear-gradient(#fff,#f6f6f6)"></div>
<svg style="left:362.5px;top:852px" width="14" height="16" viewBox="0 0 14 16"><rect x="1.55" y="0.95" width="11.9" height="14.1" rx="2" fill="none" stroke="#333" stroke-width="1.5"/><path d="M9.2 0.95 A4.25 4.25 0 0 0 13.45 5.2" fill="none" stroke="#333" stroke-width="1.2"/><rect x="3.5" y="4" width="3.7" height="3.7" fill="#333"/><circle cx="9.6" cy="10.1" r="1.95" fill="#333"/><path d="M3.2 13.6 L6.7 13.6 L4.95 9.9 Z" fill="#333"/></svg>
<div class="t" style="left:382.3px;top:853.54px;font-size:13.3px;color:#3c3c3c;font-weight:400;letter-spacing:-0.21px;">yellow_tripdata_2020-12.parquet</div>
<div class="t" style="left:943.6px;top:853.54px;font-size:13.3px;color:#3c3c3c;font-weight:400;letter-spacing:-0.29px;">Wed Aug 10 2022 13:26:45 GMT+0200</div>
<div class="t" style="right:87px;top:853.54px;font-size:13.3px;color:#3c3c3c;letter-spacing:-0.18px">22 MiB</div>
<div class="a" style="left:298px;top:879px;width:1333px;height:1px;background:#ececec"></div>
<div class="a" style="left:318px;top:892px;width:16px;height:16px;border:1px solid #c6c6c6;border-radius:2px;background:linear-gradient(#fff,#f6f6f6)"></div>
<svg style="left:362.5px;top:892px" width="14" height="16" viewBox="0 0 14 16"><rect x="1.55" y="0.95" width="11.9" height="14.1" rx="2" fill="none" stroke="#333" stroke-width="1.5"/><path d="M9.2 0.95 A4.25 4.25 0 0 0 13.45 5.2" fill="none" stroke="#333" stroke-width="1.2"/><rect x="3.5" y="4" width="3.7" height="3.7" fill="#333"/><circle cx="9.6" cy="10.1" r="1.95" fill="#333"/><path d="M3.2 13.6 L6.7 13.6 L4.95 9.9 Z" fill="#333"/></svg>
<div class="t" style="left:382.3px;top:893.54px;font-size:13.3px;color:#3c3c3c;font-weight:400;letter-spacing:-0.21px;">yellow_tripdata_2021-01.parquet</div>
<div class="t" style="left:943.6px;top:893.54px;font-size:13.3px;color:#3c3c3c;font-weight:400;letter-spacing:-0.29px;">Wed Aug 10 2022 13:26:54 GMT+0200</div>
<div class="t" style="right:87px;top:893.54px;font-size:13.3px;color:#3c3c3c;letter-spacing:-0.18px">21 MiB</div>
<div class="a" style="left:298px;top:919px;width:1333px;height:1px;background:#ececec"></div>
<div class="a" style="left:318px;top:932px;width:16px;height:16px;border:1px solid #c6c6c6;border-radius:2px;background:linear-gradient(#fff,#f6f6f6)"></div>
<svg style="left:362.5px;top:932px" width="14" height="16" viewBox="0 0 14 16"><rect x="1.55" y="0.95" width="11.9" height="14.1" rx="2" fill="none" stroke="#333" stroke-width="1.5"/><path d="M9.2 0.95 A4.25 4.25 0 0 0 13.45 5.2" fill="none" stroke="#333" stroke-width="1.2"/><rect x="3.5" y="4" width="3.7" height="3.7" fill="#333"/><circle cx="9.6" cy="10.1" r="1.95" fill="#333"/><path d="M3.2 13.6 L6.7 13.6 L4.95 9.9 Z" fill="#333"/></svg>
<div class="t" style="left:382.3px;top:933.54px;font-size:13.3px;color:#3c3c3c;font-weight:400;letter-spacing:-0.21px;">yellow_tripdata_2021-02.parquet</div>
<div class="t" style="left:943.6px;top:933.54px;font-size:13.3px;color:#3c3c3c;font-weight:400;letter-spacing:-0.29px;">Wed Aug 10 2022 13:27:01 GMT+0200</div>
<div class="t" style="right:87px;top:933.54px;font-size:13.3px;color:#3c3c3c;letter-spacing:-0.18px">21 MiB</div>
<div class="a" style="left:298px;top:959px;width:1333px;height:1px;background:#ececec"></div>
<div class="a" style="left:318px;top:972px;width:16px;height:16px;border:1px solid #c6c6c6;border-radius:2px;background:linear-gradient(#fff,#f6f6f6)"></div>
<svg style="left:362.5px;top:972px" width="14" height="16" viewBox="0 0 14 16"><rect x="1.55" y="0.95" width="11.9" height="14.1" rx="2" fill="none" stroke="#333" stroke-width="1.5"/><path d="M9.2 0.95 A4.25 4.25 0 0 0 13.45 5.2" fill="none" stroke="#333" stroke-width="1.2"/><rect x="3.5" y="4" width="3.7" height="3.7" fill="#333"/><circle cx="9.6" cy="10.1" r="1.95" fill="#333"/><path d="M3.2 13.6 L6.7 13.6 L4.95 9.9 Z" fill="#333"/></svg>
<div class="t" style="left:382.3px;top:973.54px;font-size:13.3px;color:#3c3c3c;font-weight:400;letter-spacing:-0.21px;">yellow_tripdata_2021-03.parquet</div>
<div class="t" style="left:943.6px;top:973.54px;font-size:13.3px;color:#3c3c3c;font-weight:400;letter-spacing:-0.29px;">Wed Aug 10 2022 13:27:13 GMT+0200</div>
<div class="t" style="right:87px;top:973.54px;font-size:13.3px;color:#3c3c3c;letter-spacing:-0.18px">29 MiB</div>
<div class="a" style="left:298px;top:999px;width:1333px;height:1px;background:#ececec"></div>
<div class="a" style="left:1627px;top:402.5px;width:3px;height:345.5px;border-radius:2px;background:#8c8e8d"></div>
<div class="a" style="left:0;top:114px;width:250px;height:898px;background:linear-gradient(90deg,#0a3253 0%,#08294f 45%,#09214a 80%,#0a1b43 100%)"></div>
<svg style="left:25px;top:141px" width="122" height="32" viewBox="0 0 122 32">
<text x="0" y="9" font-family="Liberation Sans" font-weight="700" font-size="10.2" fill="#fff" textLength="31" lengthAdjust="spacingAndGlyphs">MIN</text>
<rect x="33" y="1.5" width="1.2" height="7.5" fill="#fff"/>
<ellipse cx="41" cy="5.3" rx="5.3" ry="3.6" fill="none" stroke="#fff" stroke-width="1.1"/>
<text x="0.5" y="30.3" font-family="Liberation Sans" font-weight="400" font-size="23.5" fill="#fff" stroke="#0a3053" stroke-width="0.35" textLength="120.5" lengthAdjust="spacingAndGlyphs">CONSOLE</text>
</svg>
<svg style="left:220px;top:154px" width="8" height="12" viewBox="0 0 8 12"><path d="M6.5 1 L1.8 6 L6.5 11" fill="none" stroke="#fff" stroke-width="2"/></svg>
<div class="a" style="left:30px;top:221.0px;width:37px;height:37px;border-radius:50%;border:2px solid #fff;background:#04234e"></div>
<svg style="left:48.5px;top:239.5px" width="1" height="1" viewBox="0 0 1 1"><path d="M-8 -7.5 H8 L6 8 H-6 Z" fill="#8fa2b6"/><path d="M-6.8 -2.2 H6.8 M-6.2 2.6 H6.2" stroke="#04234e" stroke-width="1.3"/></svg>
<div class="t" style="left:78.3px;top:233.35px;font-size:14px;color:#bcc7d3;font-weight:400;letter-spacing:-0.38px;">Buckets</div>
<div class="a" style="left:30.5px;top:289.5px;width:36px;height:36px;border-radius:50%;background:#032450;box-shadow:inset 0 0 1.5px 1px rgba(0,20,60,.55)"></div>
<svg style="left:48.5px;top:307.5px" width="1" height="1" viewBox="0 0 1 1"><rect x="-7.7" y="-5.6" width="15.4" height="11.6" rx="1.5" fill="#8fa2b6"/><circle cx="-3.1" cy="-1.8" r="2.1" fill="#04234e"/><path d="M-6.3 4.5 C-6.3 1.5 0 1.5 0 4.5 Z" fill="#04234e"/><path d="M1.3 -1.5 H6.2 M1.3 1.2 H6.2 M1.3 3.6 H6.2" stroke="#04234e" stroke-width="0.9"/></svg>
<div class="t" style="left:78.3px;top:301.35px;font-size:14px;color:#bcc7d3;font-weight:400;letter-spacing:0.36px;">Identity</div>
<div class="a" style="left:211px;top:300.2px;width:15px;height:15px;border-radius:3px;background:#061b3f"></div>
<svg style="left:214.5px;top:304.5px" width="8" height="5" viewBox="0 0 8 5"><path d="M0.7 4.3 L4 1 L7.3 4.3" fill="none" stroke="#e8ecf0" stroke-width="0.9"/></svg>
<div class="a" style="left:30.5px;top:357.5px;width:36px;height:36px;border-radius:50%;background:#032450;box-shadow:inset 0 0 1.5px 1px rgba(0,20,60,.55)"></div>
<svg style="left:48.5px;top:375.5px" width="1" height="1" viewBox="0 0 1 1"><path d="M-2.3 -5.5 A2.3 2.3 0 0 1 2.3 -5.5 V-4 H5.8 V2 C5.8 5 3 7 0 8.3 C-3 7 -5.8 5 -5.8 2 V-4 H-2.3 Z" fill="#8fa2b6"/><circle cx="0" cy="-0.5" r="1.8" fill="#04234e"/><path d="M-2.8 4.2 C-2.8 1.8 2.8 1.8 2.8 4.2 Z" fill="#04234e"/><path d="M-1 -5.2 H1" stroke="#04234e" stroke-width="0.9"/></svg>
<div class="t" style="left:78.3px;top:369.35px;font-size:14px;color:#bcc7d3;font-weight:400;letter-spacing:-0.74px;">Access</div>
<div class="a" style="left:30.5px;top:425.5px;width:36px;height:36px;border-radius:50%;background:#032450;box-shadow:inset 0 0 1.5px 1px rgba(0,20,60,.55)"></div>
<svg style="left:48.5px;top:443.5px" width="1" height="1" viewBox="0 0 1 1"><circle cx="-1" cy="-1.5" r="5.4" fill="none" stroke="#8fa2b6" stroke-width="2.4"/><path d="M3 2.5 L7.5 7" stroke="#8fa2b6" stroke-width="2.6" stroke-linecap="round"/><path d="M-3 0 L-1.5 -3 L0 1 L1 -1 H7" fill="none" stroke="#8fa2b6" stroke-width="0.7"/></svg>
<div class="t" style="left:78.3px;top:437.35px;font-size:14px;color:#bcc7d3;font-weight:400;letter-spacing:0.38px;">Monitoring</div>
<div class="a" style="left:211px;top:436.2px;width:15px;height:15px;border-radius:3px;background:#061b3f"></div>
<svg style="left:214.5px;top:440.5px" width="8" height="5" viewBox="0 0 8 5"><path d="M0.7 4.3 L4 1 L7.3 4.3" fill="none" stroke="#e8ecf0" stroke-width="0.9"/></svg>
<div class="a" style="left:30.5px;top:493.5px;width:36px;height:36px;border-radius:50%;background:#032450;box-shadow:inset 0 0 1.5px 1px rgba(0,20,60,.55)"></div>
<svg style="left:48.5px;top:511.5px" width="1" height="1" viewBox="0 0 1 1"><path d="M-5.5 -2 C-5.5 -6 -2.5 -8 0.5 -8 C4 -8 6.5 -5.5 6.5 -2 C6.5 0.5 7.5 2 7.5 2.8 L6 3.5 C6 6 5 6.3 3 6.5 L2.5 8.3 L-5.5 6.5 C-5 4.5 -5.5 2 -5.5 -2 Z" fill="#8fa2b6"/><path d="M0 -8 V-2" stroke="#04234e" stroke-width="1.1"/><circle cx="0" cy="-0.5" r="1.8" fill="none" stroke="#04234e" stroke-width="1"/><path d="M1.4 1 L2 2.5" stroke="#04234e" stroke-width="1"/></svg>
<div class="t" style="left:78.3px;top:505.35px;font-size:14px;color:#bcc7d3;font-weight:400;letter-spacing:-0.12px;">Support</div>
<div class="a" style="left:211px;top:504.2px;width:15px;height:15px;border-radius:3px;background:#061b3f"></div>
<svg style="left:214.5px;top:508.5px" width="8" height="5" viewBox="0 0 8 5"><path d="M0.7 4.3 L4 1 L7.3 4.3" fill="none" stroke="#e8ecf0" stroke-width="0.9"/></svg>
<div class="a" style="left:30.5px;top:561.5px;width:36px;height:36px;border-radius:50%;background:#032450;box-shadow:inset 0 0 1.5px 1px rgba(0,20,60,.55)"></div>
<svg style="left:48.5px;top:579.5px" width="1" height="1" viewBox="0 0 1 1"><path d="M2.5 -5 H-7 V7 H4.8 V1" fill="none" stroke="#8fa2b6" stroke-width="1.1"/><path d="M-4.5 -1.5 H0.5 M-4.5 1.5 H2 M-4.5 4 H2" stroke="#8fa2b6" stroke-width="1.1"/><circle cx="4.8" cy="-4" r="3.1" fill="none" stroke="#8fa2b6" stroke-width="1.1"/><path d="M3.5 -4 L4.5 -3 L6.2 -5.2" fill="none" stroke="#8fa2b6" stroke-width="0.9"/></svg>
<div class="t" style="left:78.3px;top:573.35px;font-size:14px;color:#bcc7d3;font-weight:400;letter-spacing:-0.57px;">License</div>
<div class="a" style="left:30.5px;top:629.5px;width:36px;height:36px;border-radius:50%;background:#032450;box-shadow:inset 0 0 1.5px 1px rgba(0,20,60,.55)"></div>
<svg style="left:48.5px;top:647.5px" width="1" height="1" viewBox="0 0 1 1"><path d="M-1.2 -8 H1.2 L1.6 -5.6 L3.6 -4.6 L5.6 -6 L7.2 -4.4 L5.8 -2.4 L6.6 -0.4 L8 0 V1.2 L6.6 1.6 L5.8 3.6 L7.2 5.6 L5.6 7.2 L3.6 5.8 L1.6 6.6 L1.2 8.2 H-1.2 L-1.6 6.6 L-3.6 5.8 L-5.6 7.2 L-7.2 5.6 L-5.8 3.6 L-6.6 1.6 L-8 1.2 V0 L-6.6 -0.4 L-5.8 -2.4 L-7.2 -4.4 L-5.6 -6 L-3.6 -4.6 L-1.6 -5.6 Z" fill="none" stroke="#8fa2b6" stroke-width="1.1" stroke-linejoin="round" transform="translate(0,-0.1)"/><circle cx="0" cy="0" r="2.7" fill="none" stroke="#8fa2b6" stroke-width="1.1"/></svg>
<div class="t" style="left:78.3px;top:641.35px;font-size:14px;color:#bcc7d3;font-weight:400;letter-spacing:-0.26px;">Settings</div>
<div class="a" style="left:211px;top:640.2px;width:15px;height:15px;border-radius:3px;background:#061b3f"></div>
<svg style="left:214.5px;top:644.5px" width="8" height="5" viewBox="0 0 8 5"><path d="M0.7 4.3 L4 1 L7.3 4.3" fill="none" stroke="#e8ecf0" stroke-width="0.9"/></svg>
<div class="a" style="left:30.5px;top:697.5px;width:36px;height:36px;border-radius:50%;background:#032450;box-shadow:inset 0 0 1.5px 1px rgba(0,20,60,.55)"></div>
<svg style="left:48.5px;top:715.5px" width="1" height="1" viewBox="0 0 1 1"><rect x="-4.5" y="-7.6" width="12" height="12.5" fill="none" stroke="#8fa2b6" stroke-width="1.2"/><path d="M-1.6 -4 H4.6 M-1.6 -1 H4.6 M-1.6 2 H4.6" stroke="#8fa2b6" stroke-width="1.3"/><path d="M-7.4 -3.5 V8 H2" fill="none" stroke="#8fa2b6" stroke-width="1.2"/></svg>
<div class="t" style="left:78.3px;top:709.35px;font-size:14px;color:#bcc7d3;font-weight:400;letter-spacing:0.07px;">Documentation</div>
<div class="a" style="left:30.5px;top:944.5px;width:36px;height:36px;border-radius:50%;background:#032450;box-shadow:inset 0 0 1.5px 1px rgba(0,20,60,.55)"></div>
<svg style="left:48.5px;top:962.5px" width="1" height="1" viewBox="0 0 1 1"><path d="M2.8 -6.55 H-6.45 V7.6 H2.8" fill="none" stroke="#8fa2b6" stroke-width="2.1"/><path d="M-4.5 0.45 H6" stroke="#8fa2b6" stroke-width="2.1"/><path d="M3.4 -3 L6.9 0.45 L3.4 3.9" fill="none" stroke="#8fa2b6" stroke-width="2.4"/></svg>
<div class="t" style="left:78.3px;top:956.35px;font-size:14px;color:#bcc7d3;font-weight:400;letter-spacing:-0.2px;">Logout</div>
</body></html>
